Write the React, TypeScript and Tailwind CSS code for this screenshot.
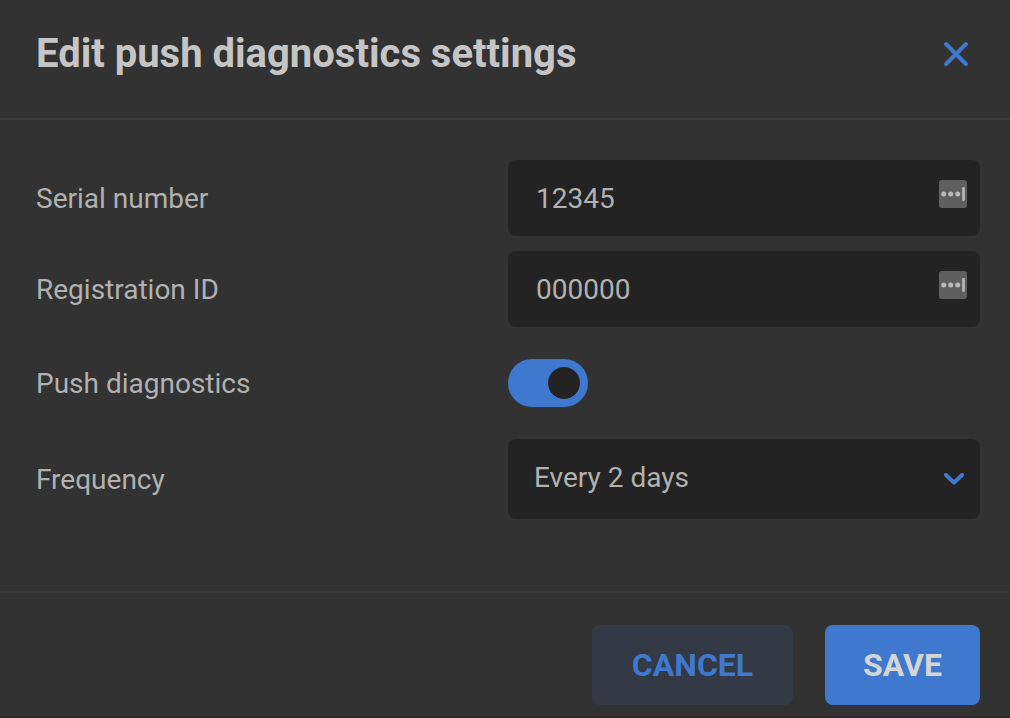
import { useState } from 'react';
import type { ReactNode } from 'react';

interface FieldRowProps {
  id: string;
  label: string;
  children: ReactNode;
}

const FieldRow = ({ id, label, children }: FieldRowProps) => (
  <div className="grid grid-cols-2 items-center">
    <label htmlFor={id} className="text-[28px] leading-[33px]">
      {label}
    </label>
    {children}
  </div>
);

/** Small badge that password managers put inside a text box */
const AutofillIcon = () => (
  <svg
    viewBox="0 0 28 28"
    className="pointer-events-none absolute top-5 right-[13px] size-7"
    aria-hidden="true"
  >
    <rect width="28" height="28" rx="3" fill="#5f5f5f" />
    <circle cx="4.7" cy="14" r="2.5" fill="#b9b9b9" />
    <circle cx="11.7" cy="14" r="2.5" fill="#b9b9b9" />
    <circle cx="18.7" cy="14" r="2.5" fill="#b9b9b9" />
    <rect x="23.2" y="7" width="2.6" height="14" rx="1" fill="#b9b9b9" />
  </svg>
);

interface TextFieldProps {
  id: string;
  label: string;
  value: string;
  onChange: (value: string) => void;
}

const TextField = ({ id, label, value, onChange }: TextFieldProps) => (
  <FieldRow id={id} label={label}>
    <div className="relative">
      <input
        id={id}
        type="text"
        value={value}
        onChange={(e) => onChange(e.target.value)}
        className="block h-[76px] w-full rounded-lg bg-[#232323] pr-14 pl-7 text-[28px] outline-none"
      />
      <AutofillIcon />
    </div>
  </FieldRow>
);

export default function App() {
  const [serial, setSerial] = useState('12345');
  const [registration, setRegistration] = useState('000000');
  const [enabled, setEnabled] = useState(true);
  const [frequency, setFrequency] = useState('2');

  return (
    <form
      className="min-h-screen border-b-2 border-[#2e282a] bg-[#323232] font-['Roboto',sans-serif] text-[#b1b1b1]"
      onSubmit={(e) => e.preventDefault()}
    >
      <header className="flex items-start justify-between border-b-2 border-[#3b3b3b] pt-[30px] pr-10 pb-10 pl-9">
        <h1 className="text-[40px] leading-[48px] font-bold text-[#c5c5c5]">Edit push diagnostics settings</h1>
        <button type="button" aria-label="Close" className="mt-[10px] text-[#3f79cf]">
          <svg viewBox="0 0 28 28" className="size-7" fill="none" stroke="currentColor" strokeWidth="4" strokeLinecap="round">
            <path d="M4 4 24 24M24 4 4 24" />
          </svg>
        </button>
      </header>

      <div className="flex flex-col gap-[15px] pt-10 pr-[30px] pb-[72px] pl-9">
        <TextField id="serial" label="Serial number" value={serial} onChange={setSerial} />
        <TextField id="registration" label="Registration ID" value={registration} onChange={setRegistration} />

        <FieldRow id="push" label="Push diagnostics">
          <div className="flex py-[17px]">
            <label className="flex h-12 w-20 cursor-pointer items-center rounded-full bg-[#5a5a5a] p-2 has-checked:justify-end has-checked:bg-[#3f79cf]">
              <input
                id="push"
                type="checkbox"
                role="switch"
                checked={enabled}
                onChange={(e) => setEnabled(e.target.checked)}
                className="size-8 appearance-none rounded-full bg-[#232323]"
              />
            </label>
          </div>
        </FieldRow>

        <FieldRow id="frequency" label="Frequency">
          <div className="relative">
            <select
              id="frequency"
              value={frequency}
              onChange={(e) => setFrequency(e.target.value)}
              className="block h-20 w-full appearance-none rounded-lg bg-[#232323] pr-14 pb-[2px] pl-[26px] text-[28px] outline-none"
            >
              <option value="1">Every day</option>
              <option value="2">Every 2 days</option>
              <option value="7">Every 7 days</option>
            </select>
            <svg
              viewBox="0 0 20 12"
              className="pointer-events-none absolute top-[34px] right-4 h-3 w-5"
              fill="none"
              stroke="#3f79cf"
              strokeWidth="4"
              strokeLinecap="round"
              strokeLinejoin="round"
              aria-hidden="true"
            >
              <path d="M2 2 10 9.6 18 2" />
            </svg>
          </div>
        </FieldRow>
      </div>

      <footer className="flex justify-end gap-8 border-t-2 border-[#3b3b3b] pt-8 pr-[30px] pb-[11px] pl-9 text-[32px] font-bold">
        <button type="button" className="h-20 min-w-[201px] rounded-lg bg-[#333a45] px-8 text-[#3f79cf]">
          CANCEL
        </button>
        <button type="submit" className="h-20 min-w-[155px] rounded-lg bg-[#3f79cf] px-8 text-[#d5d5d5]">
          SAVE
        </button>
      </footer>
    </form>
  );
}
